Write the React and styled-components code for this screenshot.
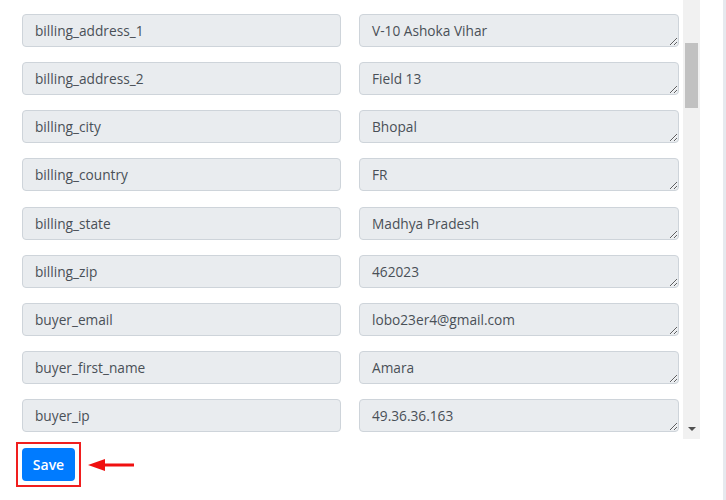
import React from "react";
import styled, { createGlobalStyle } from "styled-components";

const Global = createGlobalStyle`
  html, body { margin: 0; padding: 0; background: #fff; }
  body { font-family: "Open Sans", "Noto Sans", sans-serif; }
`;

const Page = styled.div`
  display: flex;
  width: 726px;
  height: 500px;
  overflow: hidden;
`;

const Main = styled.div`
  width: 723px;
  display: flex;
  flex-direction: column;
`;

const EdgeLine = styled.div`
  width: 3px;
  background: #e6e9ee;
`;

const ScrollBox = styled.div`
  display: flex;
  height: 439px;
  width: 700px;
`;

const Content = styled.div`
  width: 683px;
  box-sizing: border-box;
  padding: 14px 0 0 22px;
  display: grid;
  grid-template-columns: 319px 320px;
  column-gap: 18px;
  row-gap: 15.15px;
  align-content: start;
`;

const Field = styled.div`
  height: 33px;
  box-sizing: border-box;
  border: 1px solid #ced4da;
  border-radius: 4px;
  background: #e9ecef;
  color: #495057;
  font-size: 13.7px;
  display: flex;
  align-items: center;
  padding: 0 12px;
  white-space: nowrap;
`;

const Area = styled.textarea`
  height: 33px;
  width: 320px;
  box-sizing: border-box;
  border: 1px solid #ced4da;
  border-radius: 4px;
  background: #e9ecef;
  color: #495057;
  font-family: "Open Sans", "Noto Sans", sans-serif;
  font-size: 13.7px;
  line-height: 20px;
  padding: 6px 12px 4px;
  margin: 0;
  overflow: hidden;
  display: block;
  outline: none;
`;

const Track = styled.div`
  width: 17px;
  background: #f1f1f1;
  display: flex;
  flex-direction: column;
  align-items: center;
`;

const Thumb = styled.div`
  width: 13px;
  height: 65px;
  margin-top: 43px;
  background: #c1c1c1;
`;

const Spacer = styled.div`
  flex: 1;
`;

const DownArrow = styled.div`
  width: 0;
  height: 0;
  border-left: 4px solid transparent;
  border-right: 4px solid transparent;
  border-top: 4px solid #505050;
  margin-bottom: 8px;
`;

const Footer = styled.div`
  display: flex;
  align-items: center;
  padding: 3px 0 0 16px;
  gap: 6px;
`;

const Highlight = styled.div`
  border: 2px solid #f01e1e;
  padding: 4px;
  display: flex;
`;

const SaveButton = styled.button`
  width: 53px;
  height: 33px;
  border: none;
  border-radius: 4px;
  background: #007bff;
  color: #fff;
  font-family: "Open Sans", "Noto Sans", sans-serif;
  font-size: 14px;
  font-weight: 600;
  padding: 0;
  cursor: pointer;
`;

const rows = [
  ["billing_address_1", "V-10 Ashoka Vihar"],
  ["billing_address_2", "Field 13"],
  ["billing_city", "Bhopal"],
  ["billing_country", "FR"],
  ["billing_state", "Madhya Pradesh"],
  ["billing_zip", "462023"],
  ["buyer_email", "lobo23er4@gmail.com"],
  ["buyer_first_name", "Amara"],
  ["buyer_ip", "49.36.36.163"],
];

export default function App() {
  return (
    <>
      <Global />
      <Page>
        <Main>
          <ScrollBox>
            <Content>
              {rows.map(([k, v]) => (
                <React.Fragment key={k}>
                  <Field>{k}</Field>
                  <Area readOnly value={v} />
                </React.Fragment>
              ))}
            </Content>
            <Track>
              <Thumb />
              <Spacer />
              <DownArrow />
            </Track>
          </ScrollBox>
          <Footer>
            <Highlight>
              <SaveButton>Save</SaveButton>
            </Highlight>
            <svg width="48" height="14" viewBox="0 0 48 14">
              <line x1="14" y1="7" x2="47" y2="7" stroke="#f01010" strokeWidth="3" />
              <polygon points="1,7 18,1 18,13" fill="#f01010" />
            </svg>
          </Footer>
        </Main>
        <EdgeLine />
      </Page>
    </>
  );
}
